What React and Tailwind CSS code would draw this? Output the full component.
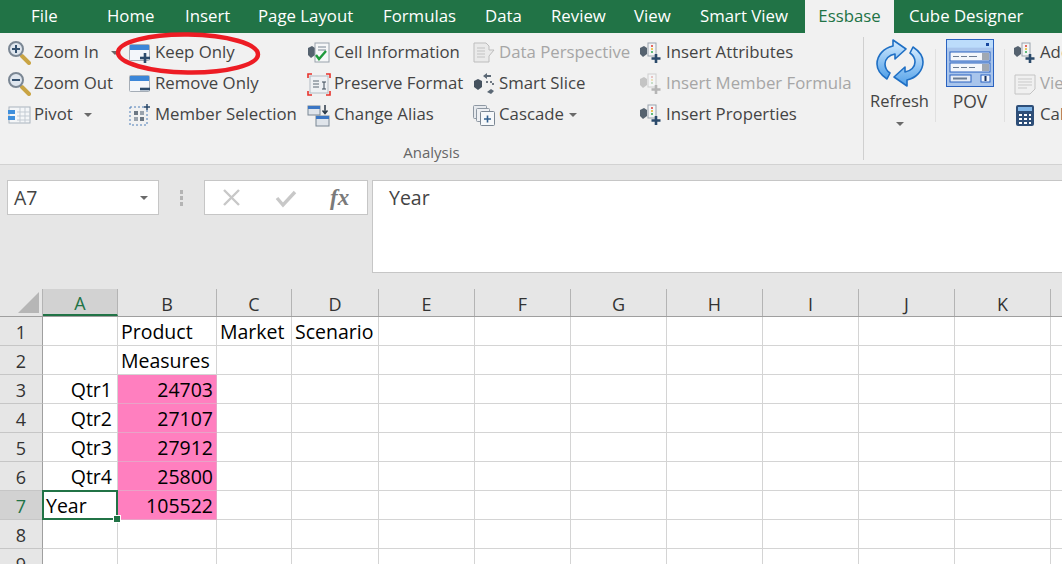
import React from 'react';

const tabs = [
  { label: 'File', w: 'w-[107px]', pad: 'pl-[31px]' },
  { label: 'Home', w: 'w-[78px]', pad: '' },
  { label: 'Insert', w: 'w-[73px]', pad: '' },
  { label: 'Page Layout', w: 'w-[125px]', pad: '' },
  { label: 'Formulas', w: 'w-[102px]', pad: '' },
  { label: 'Data', w: 'w-[66px]', pad: '' },
  { label: 'Review', w: 'w-[83px]', pad: '' },
  { label: 'View', w: 'w-[66px]', pad: '' },
  { label: 'Smart View', w: 'w-[105px]', pad: '' },
];

const Ico = ({ children }) => (
  <svg width="24" height="24" viewBox="0 0 24 24" className="shrink-0">{children}</svg>
);

const ZoomIcon = ({ plus }) => (
  <Ico>
    <path d="M15 15l7 7" stroke="#c9a444" strokeWidth="4" strokeLinecap="round" />
    <circle cx="9" cy="8" r="7" fill="#dfe6ee" stroke="#7b8794" strokeWidth="2" />
    <path d="M5 8h8" stroke="#34506e" strokeWidth="2" />
    {plus && <path d="M9 4v8" stroke="#34506e" strokeWidth="2" />}
  </Ico>
);

const PivotIcon = () => (
  <Ico>
    <rect x="2" y="4" width="21" height="16" fill="#f4f6f8" stroke="#aab4be" />
    <path d="M10 9h13M10 13h13M10 17h13M13 4v16M18 4v16" stroke="#c3cbd3" />
    <rect x="1" y="7" width="7" height="4" fill="#3f8fdc" />
    <rect x="1" y="13" width="7" height="4" fill="#3f8fdc" />
  </Ico>
);

const WindowIcon = ({ plus }) => (
  <Ico>
    <rect x="1.5" y="3.5" width="20" height="16" rx="1" fill="#f3f6fa" stroke="#a5adb6" />
    <rect x="2" y="4" width="19" height="5" fill="#3b86d8" />
    <path d="M12 17h10" stroke="#2b4a6b" strokeWidth="2.6" />
    {plus && <path d="M17 12v10" stroke="#2b4a6b" strokeWidth="2.6" />}
  </Ico>
);

const MemberSelIcon = () => (
  <Ico>
    <rect x="2" y="4" width="17" height="18" fill="none" stroke="#4f7fb8" strokeDasharray="2 2" />
    <rect x="6" y="8" width="4" height="4" fill="#6c7783" />
    <rect x="12" y="8" width="4" height="4" fill="#9aa3ad" />
    <rect x="6" y="14" width="4" height="4" fill="#9aa3ad" />
    <rect x="12" y="14" width="4" height="4" fill="#6c7783" />
    <path d="M19 1v6M16 4h6" stroke="#2b4a6b" strokeWidth="1.5" />
  </Ico>
);

const CellInfoIcon = () => (
  <Ico>
    <path d="M1 7l4-2 3 2v7l-4 3-3-3z" fill="#55626f" />
    <rect x="8" y="2" width="14" height="19" fill="#f6f7f8" stroke="#9aa3ad" />
    <path d="M11 6h8M11 9h8" stroke="#7b8794" />
    <path d="M9 14l3 4 7-8" fill="none" stroke="#1f9a3c" strokeWidth="2.4" />
  </Ico>
);

const PreserveIcon = () => (
  <Ico>
    <rect x="3" y="4" width="18" height="17" fill="#eef1f4" stroke="#b4bcc4" />
    <path d="M6 9h6M6 12h6M6 15h6" stroke="#5b6875" />
    <path d="M15 10h4M17 10v7M15 17h4" stroke="#3c4a58" />
    <path d="M1 6V2h4M19 2h4v4M1 19v4h4M23 19v4h-4" fill="none" stroke="#e8322b" strokeWidth="1.6" />
  </Ico>
);

const AliasIcon = () => (
  <Ico>
    <rect x="1" y="3" width="12" height="9" fill="#dfe4ea" stroke="#7b8794" />
    <rect x="1" y="3" width="12" height="3" fill="#3b76c4" />
    <rect x="9" y="13" width="13" height="10" fill="#dfe4ea" stroke="#7b8794" />
    <rect x="9" y="13" width="13" height="3" fill="#3b76c4" />
    <path d="M18 2v8M15.5 7.5L18 10.5l2.5-3" fill="none" stroke="#2b3947" strokeWidth="1.5" />
  </Ico>
);

const PerspectiveIcon = () => (
  <Ico>
    <path d="M2 2h12l3 3v4h5l-5 6v6H2z" fill="#eaeaea" stroke="#bdbdbd" />
    <path d="M5 7h8M5 10h8M5 13h8M5 16h8" stroke="#c2c2c2" />
  </Ico>
);

const SliceIcon = () => (
  <Ico>
    <path d="M2 9l4-2 4 2v6l-4 3-4-3z" fill="#45525f" />
    <path d="M11 4l4-3v2h4v2h-4v2zM15 20l4-3 3 2-3 3z" fill="#5b6875" />
    <path d="M14 10h7v5" fill="none" stroke="#45525f" strokeDasharray="2 2" strokeWidth="1.5" />
  </Ico>
);

const CascadeIcon = () => (
  <Ico>
    <rect x="1.5" y="2.5" width="13" height="13" rx="1" fill="#e6e9ed" stroke="#8e98a3" />
    <rect x="4.5" y="5.5" width="13" height="13" rx="1" fill="#eef0f3" stroke="#8e98a3" />
    <rect x="8.5" y="8.5" width="14" height="14" rx="1" fill="#f6f8fa" stroke="#7b8794" />
    <path d="M12 16h7M15.5 12.5v7" stroke="#33608f" strokeWidth="1.6" />
  </Ico>
);

const AttrIcon = ({ off }) => {
  const dark = off ? '#c4c4c4' : '#55626f';
  const plus = off ? '#b5b5b5' : '#2b4a6b';
  return (
    <Ico>
      <path d="M1 7l4-2 3 2v6l-4 3-3-3z" fill={dark} />
      <rect x="9" y="2" width="8" height="13" fill="#f4f5f6" stroke={off ? '#cfcfcf' : '#9aa3ad'} />
      <circle cx="13" cy="5" r="1" fill={off ? '#e3b3b3' : '#dd3b31'} />
      <circle cx="13" cy="8" r="1" fill={off ? '#ead8a6' : '#e6b422'} />
      <circle cx="13" cy="11" r="1" fill={off ? '#b8d6b8' : '#2fa84f'} />
      <path d="M17 13v9M12.5 17.5h9" stroke={plus} strokeWidth="2.6" />
    </Ico>
  );
};

const ViewIcon = () => (
  <Ico>
    <path d="M2 3h20v14l-5 5H2z" fill="#f0f0f0" stroke="#c4c4c4" />
    <path d="M5 7h14M5 10h14M5 13h14M5 16h9" stroke="#c9c9c9" />
  </Ico>
);

const CalcIcon = () => (
  <Ico>
    <rect x="3" y="2" width="18" height="21" rx="2" fill="#2e4e78" />
    <rect x="5" y="4" width="14" height="4" fill="#7fb4e6" />
    <path d="M6 11h3v2H6zM11 11h3v2h-3zM16 11h2v2h-2zM6 15h3v2H6zM11 15h3v2h-3zM16 15h2v2h-2zM6 19h3v2H6zM11 19h3v2h-3zM16 19h2v2h-2z" fill="#fff" />
  </Ico>
);

const RefreshIcon = () => (
  <svg width="48" height="48" viewBox="0 0 48 48">
    <defs>
      <linearGradient id="rf" x1="0" y1="0" x2="0" y2="1">
        <stop offset="0" stopColor="#d6ecff" />
        <stop offset="1" stopColor="#4f9fe8" />
      </linearGradient>
    </defs>
    <path d="M17 1l13 9-11 10v-5c-6 1-10 5-10 10 0 4 2 7 5 9l-3 6C5 36 1 31 1 25 1 16 8 9 17 7z" fill="url(#rf)" stroke="#1f6fc4" strokeWidth="1.6" strokeLinejoin="round" />
    <path d="M31 47l-13-9 11-10v5c6-1 10-5 10-10 0-4-2-7-5-9l3-6c6 4 10 9 10 15 0 9-7 16-16 18z" fill="url(#rf)" stroke="#1f6fc4" strokeWidth="1.6" strokeLinejoin="round" />
  </svg>
);

const PovIcon = () => (
  <svg width="48" height="48" viewBox="0 0 48 48">
    <rect x="0.5" y="0.5" width="47" height="47" fill="#b4d4f7" stroke="#2a62c0" />
    <rect x="1" y="1" width="46" height="7" fill="#bcdcfb" />
    <rect x="40" y="4" width="3" height="3" fill="#17479e" />
    <rect x="1" y="9" width="46" height="38" fill="#a9c5ec" />
    <rect x="4" y="13" width="40" height="9" fill="#f3f6fb" stroke="#2a62c0" />
    <path d="M7 17.5h6M15 17.5h6M23 17.5h8" stroke="#6b7c93" />
    <rect x="36" y="14" width="7" height="7" fill="#a0a8b2" />
    <rect x="4" y="24" width="40" height="9" fill="#f3f6fb" stroke="#2a62c0" />
    <path d="M7 28.5h6M15 28.5h6M23 28.5h6" stroke="#6b7c93" />
    <rect x="36" y="25" width="7" height="7" fill="#a0a8b2" />
    <rect x="4" y="36" width="21" height="7" fill="#e6ecf5" stroke="#2a62c0" />
    <path d="M7 39.5h14" stroke="#6b7c93" strokeWidth="2" />
    <rect x="35" y="36" width="9" height="7" fill="#f3f6fb" stroke="#2a62c0" />
    <rect x="38.5" y="37" width="2" height="5" fill="#17305e" />
  </svg>
);

const Caret = ({ className = '' }) => (
  <span className={`inline-block w-0 h-0 border-x-[4px] border-x-transparent border-t-[4px] border-t-[#6a6a6a] ${className}`} />
);

const RibbonItem = ({ icon, label, off, caret }) => (
  <div className={`h-[31px] flex items-center gap-[3px] whitespace-nowrap ${off ? 'text-[#a6a6a6]' : 'text-[#444444]'}`}>
    {icon}
    <span>{label}</span>
    {caret}
  </div>
);

const ribbonCols = [
  {
    w: 'w-[121px]',
    items: [
      { icon: <ZoomIcon plus />, label: 'Zoom In', caret: <Caret className="ml-[9px]" /> },
      { icon: <ZoomIcon />, label: 'Zoom Out' },
      { icon: <PivotIcon />, label: 'Pivot', caret: <Caret className="ml-[8px]" /> },
    ],
  },
  {
    w: 'w-[179px]',
    items: [
      { icon: <WindowIcon plus />, label: 'Keep Only' },
      { icon: <WindowIcon />, label: 'Remove Only' },
      { icon: <MemberSelIcon />, label: 'Member Selection' },
    ],
  },
  {
    w: 'w-[165px]',
    items: [
      { icon: <CellInfoIcon />, label: 'Cell Information' },
      { icon: <PreserveIcon />, label: 'Preserve Format' },
      { icon: <AliasIcon />, label: 'Change Alias' },
    ],
  },
  {
    w: 'w-[167px]',
    items: [
      { icon: <PerspectiveIcon />, label: 'Data Perspective', off: true },
      { icon: <SliceIcon />, label: 'Smart Slice' },
      { icon: <CascadeIcon />, label: 'Cascade', caret: <Caret className="ml-[2px]" /> },
    ],
  },
  {
    w: 'w-[224px]',
    items: [
      { icon: <AttrIcon />, label: 'Insert Attributes' },
      { icon: <AttrIcon off />, label: 'Insert Member Formula', off: true },
      { icon: <AttrIcon />, label: 'Insert Properties' },
    ],
  },
];

const columns = [
  { name: 'A', w: 'w-[75px]', active: true },
  { name: 'B', w: 'w-[99px]' },
  { name: 'C', w: 'w-[75px]' },
  { name: 'D', w: 'w-[87px]' },
  { name: 'E', w: 'w-[96px]' },
  { name: 'F', w: 'w-[96px]' },
  { name: 'G', w: 'w-[96px]' },
  { name: 'H', w: 'w-[96px]' },
  { name: 'I', w: 'w-[96px]' },
  { name: 'J', w: 'w-[96px]' },
  { name: 'K', w: 'w-[96px]' },
  { name: 'L', w: 'w-[96px]' },
];

const rows = [
  { n: 1, cells: { B: 'Product', C: 'Market', D: 'Scenario' } },
  { n: 2, cells: { B: 'Measures' } },
  { n: 3, cells: { A: 'Qtr1', B: '24703' }, pink: true },
  { n: 4, cells: { A: 'Qtr2', B: '27107' }, pink: true },
  { n: 5, cells: { A: 'Qtr3', B: '27912' }, pink: true },
  { n: 6, cells: { A: 'Qtr4', B: '25800' }, pink: true },
  { n: 7, cells: { A: 'Year', B: '105522' }, pink: true, active: true },
  { n: 8, cells: {} },
  { n: 9, cells: {} },
];

const Cell = ({ col, row }) => {
  const value = row.cells[col.name];
  const isPink = row.pink && col.name === 'B';
  const isActive = row.active && col.name === 'A';
  const rightAlign = (col.name === 'A' && row.n !== 7) || isPink;
  return (
    <div
      className={`${col.w} shrink-0 h-full relative border-r border-b pl-[3px] pt-[2px] flex items-center overflow-visible whitespace-nowrap text-black text-[19.5px] ${
        col.name === 'A' ? 'pr-[5px]' : 'pr-[3px]'
      } ${isPink ? 'bg-[#ff7fbf] border-[#e8a3c7]' : 'border-[#d4d4d4]'} ${rightAlign ? 'justify-end' : ''} ${isActive ? 'z-10' : ''}`}
    >
      {value}
      {isActive && (
        <>
          <span className="absolute -left-px -top-px w-[76px] h-[30px] border-2 border-[#217346]" />
          <span className="absolute right-[-3px] bottom-[-3px] w-[6px] h-[6px] bg-[#217346] outline outline-1 outline-white" />
        </>
      )}
    </div>
  );
};

export default function App() {
  return (
    <div className="w-[1062px] h-[564px] overflow-hidden relative bg-white font-['Open_Sans','Noto_Sans',sans-serif] text-[16.8px] leading-none">
      {/* tabs */}
      <div className="h-[33px] bg-[#217346] flex items-center text-white">
        {tabs.map((t) => (
          <div key={t.label} className={`${t.w} ${t.pad} shrink-0 whitespace-nowrap`}>{t.label}</div>
        ))}
        <div className="w-[89px] h-full bg-[#f1f1f1] text-[#217346] flex items-center justify-center shrink-0">Essbase</div>
        <div className="pl-[15px] whitespace-nowrap">Cube Designer</div>
      </div>

      {/* ribbon */}
      <div className="h-[132px] bg-[#f1f1f1] border-b border-[#d2d2d2] flex pt-[4px] pl-[7px]">
        <div className="flex flex-col">
          <div className="flex">
            {ribbonCols.map((c) => (
              <div key={c.items[0].label} className={`${c.w} shrink-0`}>
                {c.items.map((it) => <RibbonItem key={it.label} {...it} />)}
              </div>
            ))}
          </div>
          <div className="w-[849px] text-center text-[15px] text-[#666666] mt-[15px]">Analysis</div>
        </div>
        <div className="w-px h-[123px] bg-[#d0d0d0] shrink-0" />
        <div className="w-[71px] flex flex-col items-center text-[#444444] pt-[2px] shrink-0">
          <RefreshIcon />
          <div className="mt-[6px] text-[16.5px]">Refresh</div>
          <Caret className="mt-[12px]" />
        </div>
        <div className="w-px h-[73px] mt-[12px] bg-[#e0e0e0] shrink-0" />
        <div className="w-[68px] flex flex-col items-center text-[#444444] pt-[2px] shrink-0">
          <PovIcon />
          <div className="mt-[6px] text-[17.5px]">POV</div>
        </div>
        <div className="w-px h-[73px] mt-[12px] bg-[#e0e0e0] shrink-0" />
        <div className="pl-[8px] shrink-0 whitespace-nowrap">
          <RibbonItem icon={<AttrIcon />} label="Add" />
          <RibbonItem icon={<ViewIcon />} label="View" off />
          <RibbonItem icon={<CalcIcon />} label="Calc" />
        </div>
      </div>

      {/* formula bar */}
      <div className="h-[124px] bg-[#e6e6e6] flex items-start pl-[7px] pt-[15px] text-[19.5px]">
        <div className="w-[152px] h-[35px] bg-white border border-[#c6c6c6] flex items-center justify-between pl-[6px] pr-[10px] text-[#444444] shrink-0">
          A7
          <Caret />
        </div>
        <div className="w-[45px] h-[35px] flex flex-col items-center justify-center gap-[2px] shrink-0">
          <span className="w-[3px] h-[4px] bg-[#b4b4b4]" />
          <span className="w-[3px] h-[4px] bg-[#b4b4b4]" />
          <span className="w-[3px] h-[4px] bg-[#b4b4b4]" />
        </div>
        <div className="w-[164px] h-[35px] bg-white border border-[#c6c6c6] flex items-center shrink-0">
          <svg width="20" height="20" viewBox="0 0 20 20" className="ml-[17px] shrink-0"><path d="M2 2l15 15M17 2L2 17" stroke="#c8c8c8" strokeWidth="2.4" /></svg>
          <svg width="22" height="20" viewBox="0 0 22 20" className="ml-[33px] shrink-0"><path d="M2 10l6 7L20 4" fill="none" stroke="#c8c8c8" strokeWidth="3.4" /></svg>
          <span className="ml-[33px] font-['Liberation_Serif',serif] italic font-bold text-[23px] text-[#7a7a7a]">fx</span>
        </div>
        <div className="ml-[4px] flex-1 h-[93px] bg-white border border-[#c6c6c6] border-r-0 pl-[16px] pt-[7px] text-[#444444]">Year</div>
      </div>

      {/* sheet */}
      <div>
        <div className="h-[28px] flex bg-[#e6e6e6] border-b border-[#9f9f9f] text-[18px]">
          <div className="w-[43px] shrink-0 border-r border-[#b4b4b4] relative">
            <span className="absolute right-[3px] bottom-[3px] w-0 h-0 border-l-[21px] border-l-transparent border-b-[21px] border-b-[#b6b6b6]" />
          </div>
          {columns.map((c) => (
            <div
              key={c.name}
              className={`${c.w} shrink-0 flex items-center justify-center border-r border-[#b4b4b4] pt-[2px] ${
                c.active ? 'bg-[#d2d2d2] text-[#217346] border-b-2 border-b-[#217346]' : 'text-[#333333]'
              }`}
            >
              {c.name === 'L' ? '' : c.name}
            </div>
          ))}
        </div>
        {rows.map((row) => (
          <div key={row.n} className="h-[29px] flex text-[18px]">
            <div
              className={`w-[43px] shrink-0 flex items-center justify-center pt-[2px] border-r border-b border-r-[#9f9f9f] border-b-[#c6c6c6] ${
                row.active ? 'bg-[#d2d2d2] text-[#217346]' : 'bg-[#e6e6e6] text-[#333333]'
              }`}
            >
              {row.n}
            </div>
            {columns.map((col) => <Cell key={col.name} col={col} row={row} />)}
          </div>
        ))}
      </div>

      {/* hand-drawn highlight round Keep Only */}
      <svg className="absolute left-[114px] top-[30px] pointer-events-none" width="150" height="48" viewBox="0 0 150 48">
        <ellipse cx="74" cy="23.5" rx="70" ry="19" fill="none" stroke="#ed1c24" strokeWidth="4.5" transform="rotate(0.8 74 23.5)" />
      </svg>
    </div>
  );
}
